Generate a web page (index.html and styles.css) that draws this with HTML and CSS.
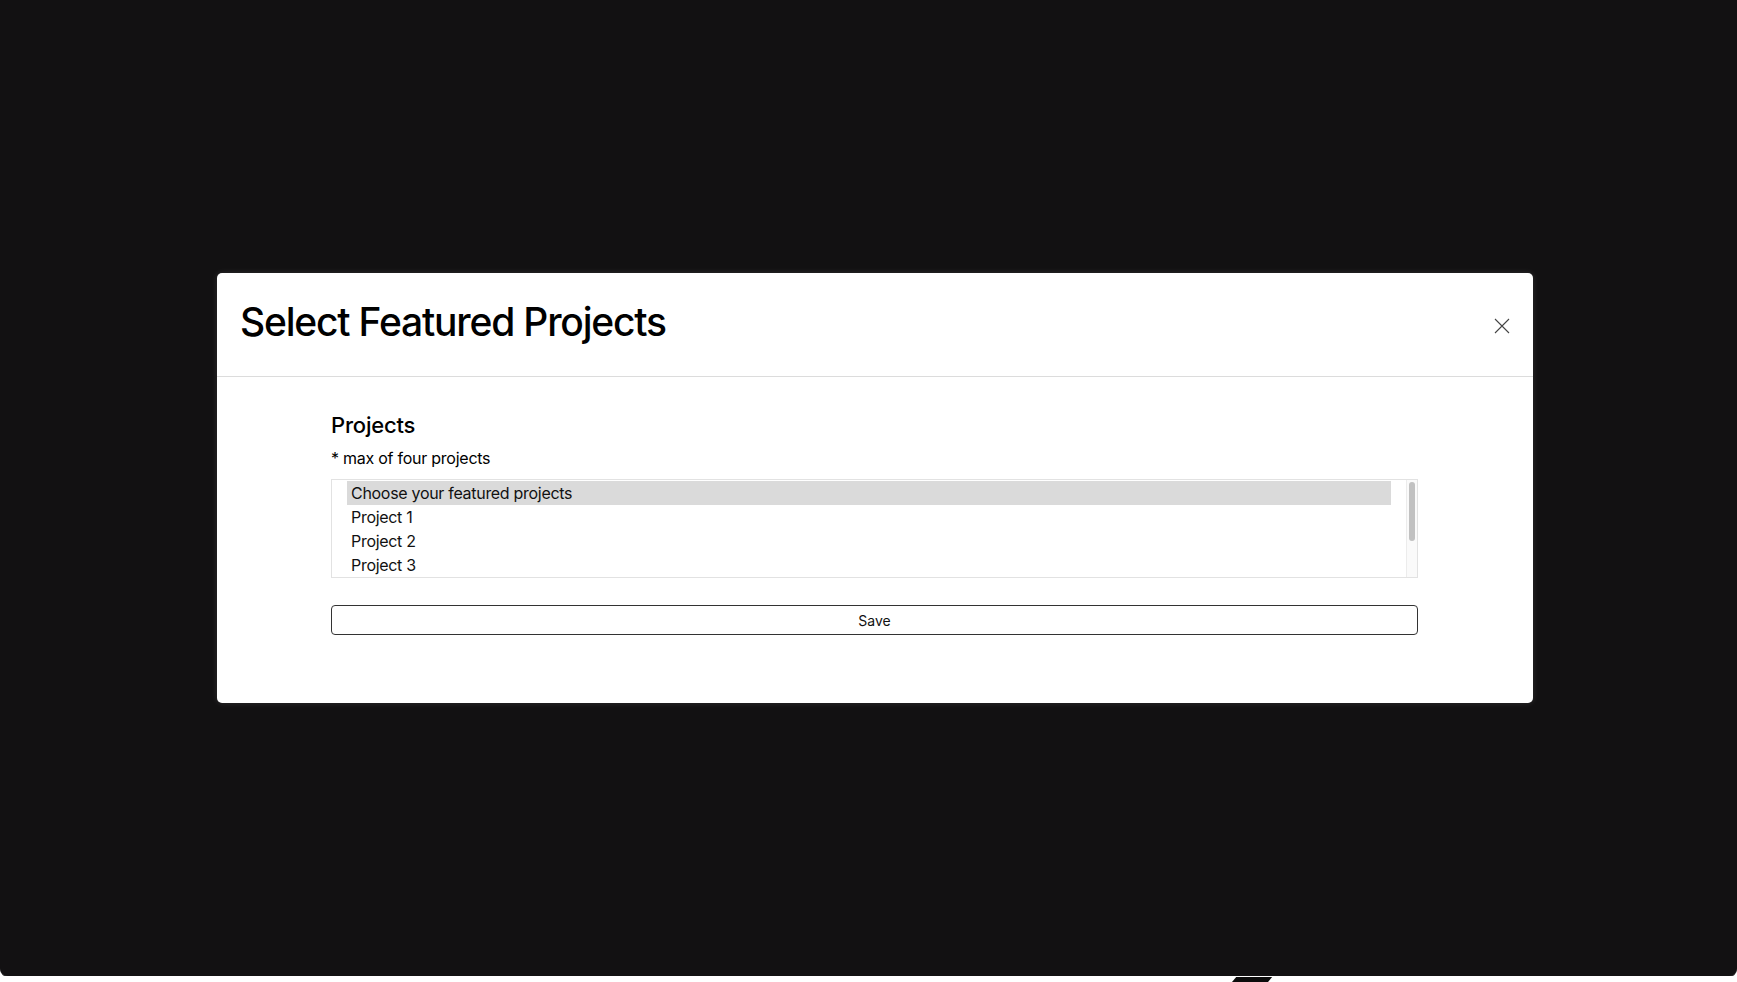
FILE: index.html
```html
<!DOCTYPE html>
<html lang="en">
<head>
<meta charset="utf-8">
<title>Select Featured Projects</title>
<link rel="stylesheet" href="styles.css">
</head>
<body>
<div class="backdrop">
  <div class="modal" role="dialog" aria-labelledby="modal-title">
    <div class="modal-header">
      <h1 class="modal-title" id="modal-title">Select Featured Projects</h1>
      <button class="close-btn" aria-label="Close">
        <svg width="16" height="16" viewBox="0 0 16 16"><path d="M1 1 L15 15 M15 1 L1 15" stroke="#444" stroke-width="1.1" fill="none"/></svg>
      </button>
    </div>
    <div class="modal-body">
      <h2 class="section-title">Projects</h2>
      <p class="hint">* max of four projects</p>
      <div class="listbox" role="listbox">
        <div class="options">
          <div class="option selected">Choose your featured projects</div>
          <div class="option">Project 1</div>
          <div class="option">Project 2</div>
          <div class="option">Project 3</div>
        </div>
        <div class="scrollbar"><div class="thumb"></div></div>
      </div>
      <button class="save-btn">Save</button>
    </div>
  </div>
</div>
<div class="peek"></div>
</body>
</html>
```
FILE: styles.css
```css
html, body {
  margin: 0;
  padding: 0;
  background: #ffffff;
  font-family: Inter, "Noto Sans", sans-serif;
  overflow: hidden;
}
.backdrop {
  height: 976px;
  background: #121112;
  border-radius: 0 0 8px 8px;
  box-shadow: 0 1px 0 #3a3a3a;
  padding: 273px 0 0 217px;
  box-sizing: border-box;
}
.modal {
  width: 1316px;
  background: #fff;
  border-radius: 5px;
  box-shadow: 0 0 6px rgba(255,255,255,0.12);
}
.modal-header {
  height: 103px;
  border-bottom: 1px solid #dcdcdc;
  display: flex;
  align-items: center;
  justify-content: space-between;
  padding: 0 23px 0 23px;
}
.modal-title {
  margin: 0 0 6px;
  font-size: 39px;
  font-weight: 500;
  letter-spacing: -1.2px;
  color: #000;
  line-height: 48px;
}
.close-btn {
  border: 0;
  background: transparent;
  padding: 0;
  width: 16px;
  height: 16px;
  margin-top: 3px;
  display: flex;
}
.modal-body {
  padding: 36px 115px 68px 114px;
}
.section-title {
  margin: 0 0 9px;
  font-size: 22px;
  font-weight: 500;
  letter-spacing: -0.2px;
  line-height: 24px;
  color: #000;
}
.hint {
  margin: 0 0 9px;
  font-size: 16px;
  letter-spacing: -0.25px;
  line-height: 24px;
  color: #000;
}
.listbox {
  border: 1px solid #e2e2e2;
  height: 97px;
  display: flex;
}
.options {
  flex: 1;
  padding: 1px 15px 0 15px;
}
.option {
  height: 24px;
  line-height: 24px;
  font-size: 16px;
  letter-spacing: -0.3px;
  padding-left: 4px;
  color: #111;
}
.option.selected {
  background: #dadada;
}
.scrollbar {
  box-sizing: border-box;
  width: 11px;
  border-left: 1px solid #ececec;
  background: #fafafa;
  padding: 2px 1px 0 2px;
}
.thumb {
  width: 6px;
  height: 59px;
  border-radius: 3px;
  background: #c1c1c1;
}
.save-btn {
  display: block;
  margin-top: 27px;
  width: 100%;
  height: 30px;
  border: 1px solid #333;
  border-radius: 4px;
  background: #fff;
  font-family: Inter, "Noto Sans", sans-serif;
  font-size: 14px;
  color: #111;
}
.peek {
  position: absolute;
  left: 1232px;
  top: 977px;
  width: 36px;
  height: 10px;
  background: #0c0c0c;
  transform: skewX(-40deg);
}
```
